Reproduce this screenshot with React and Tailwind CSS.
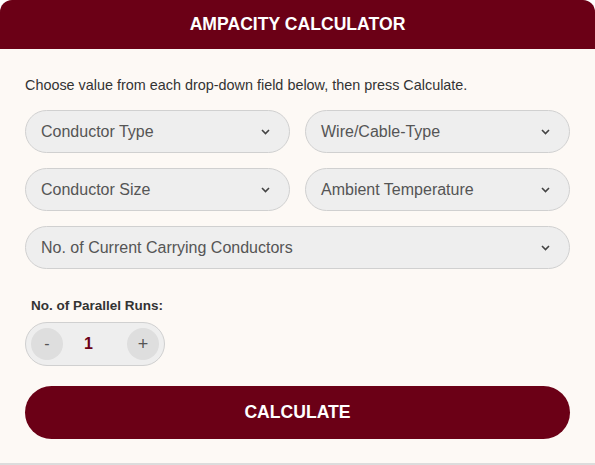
const Chevron = () => (
  <svg width="9" height="6" viewBox="0 0 9 6" fill="none" className="shrink-0">
    <path d="M1 1l3.5 3.5L8 1" stroke="#444" strokeWidth="1.6" />
  </svg>
);

const Select = ({ label, className = "" }) => (
  <div
    className={`h-[43px] rounded-full bg-[#eeeeee] border border-[#d0d0d0] flex items-center justify-between pl-[15px] pr-[19px] ${className}`}
  >
    <span className="text-[16px] text-[#555]">{label}</span>
    <Chevron />
  </div>
);

export default function App() {
  return (
    <div
      className="w-[595px] h-[465px] bg-[#fdf9f5] rounded-t-[12px] overflow-hidden border-b-[2px] border-[#dcdcdc] flex flex-col"
      style={{ fontFamily: '"Liberation Sans", Arial, sans-serif' }}
    >
      <div className="h-[49px] bg-[#6b0016] flex items-center justify-center">
        <h1 className="text-white font-bold text-[17.6px]">AMPACITY CALCULATOR</h1>
      </div>
      <div className="px-[25px] pt-[27px]">
        <p className="text-[14.4px] text-[#333] leading-[18px]">
          Choose value from each drop-down field below, then press Calculate.
        </p>
        <div className="grid grid-cols-2 gap-[15px] mt-[16px]">
          <Select label="Conductor Type" />
          <Select label="Wire/Cable-Type" />
          <Select label="Conductor Size" />
          <Select label="Ambient Temperature" />
          <Select label="No. of Current Carrying Conductors" className="col-span-2" />
        </div>
        <p className="mt-[29px] ml-[6px] text-[13.5px] font-bold text-[#333] leading-[16px]">
          No. of Parallel Runs:
        </p>
        <div className="mt-[8px] w-[140px] h-[44px] rounded-full bg-[#eeeeee] border border-[#d0d0d0] flex items-center px-[5px]">
          <button className="w-[32px] h-[32px] rounded-full bg-[#dedede] text-[#555] text-[16px] flex items-center justify-center">
            -
          </button>
          <span className="ml-[21px] text-[16px] font-bold text-[#6b0016]">1</span>
          <button className="ml-auto w-[32px] h-[32px] rounded-full bg-[#dedede] text-[#555] text-[18px] flex items-center justify-center">
            +
          </button>
        </div>
        <button className="mt-[20px] w-full h-[53px] rounded-full bg-[#6b0016] text-white font-bold text-[17.6px]">
          CALCULATE
        </button>
      </div>
    </div>
  );
}
